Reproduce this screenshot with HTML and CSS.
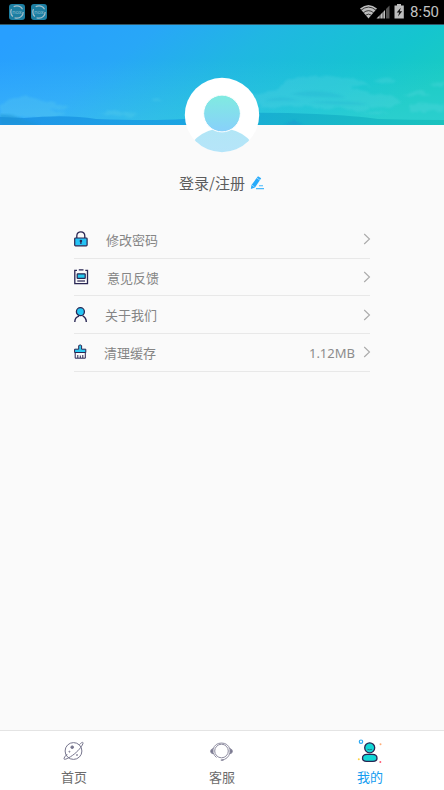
FILE: index.html
```html
<!DOCTYPE html>
<html lang="zh-CN">
<head>
<meta charset="utf-8">
<title>我的</title>
<link rel="stylesheet" href="styles.css">
</head>
<body>
<div class="screen">
  <header class="status">
    <div class="apps">
      <svg class="app" viewBox="0 0 16 16"><rect width="16" height="16" rx="3" fill="#1c7ea2"/><circle cx="8" cy="8" r="6.2" fill="none" stroke="#a4bec9" stroke-width="1.2" stroke-dasharray="12 2 8 3 10 4"/><text x="8" y="10" text-anchor="middle">nox</text></svg>
      <svg class="app" viewBox="0 0 16 16"><rect width="16" height="16" rx="3" fill="#1c7ea2"/><circle cx="8" cy="8" r="6.2" fill="none" stroke="#a4bec9" stroke-width="1.2" stroke-dasharray="12 2 8 3 10 4"/><text x="8" y="10" text-anchor="middle">nox</text></svg>
    </div>
    <div class="system">
      <svg width="46" height="16" viewBox="0 0 46 16">
        <path d="M0 4.5Q8.5-2.5 17 4.5L8.5 14.5Z" fill="#bdbdbd"/>
        <path d="M1 6.2Q8.5 0 16 6.2M3.3 8.8Q8.5 4.5 13.7 8.8M5.5 11.2Q8.5 9 11.5 11.2" fill="none" stroke="#000" stroke-width=".7"/>
        <path d="M16.5 14.5L25 6V14.5Z" fill="#bdbdbd"/><path d="M26 14.5V5L29.5 1.5V14.5Z" fill="#555"/>
        <path d="M20 10V15M23 7V15" stroke="#000" stroke-width=".6"/>
        <path d="M34.5 1.5H37V0H41V1.5H43.8V14.5H34.5Z" fill="#bdbdbd"/><path d="M40.8 3.8L36.7 8.6H39.2L38 12.4L42.2 7.2H39.7Z" fill="#111"/>
      </svg>
      <span>8:50</span>
    </div>
  </header>
  <section class="hero">
    <svg class="scene" viewBox="0 0 444 101" preserveAspectRatio="none">
      <defs>
        <linearGradient id="sky" x1="0" y1=".2" x2="1" y2=".5"><stop offset="0" stop-color="#289fff"/><stop offset=".28" stop-color="#28a7f7"/><stop offset=".52" stop-color="#20b7e2"/><stop offset=".84" stop-color="#15c5cf"/><stop offset="1" stop-color="#18cbc3"/></linearGradient>
        <linearGradient id="haze" x1="0" y1="0" x2="0" y2="1"><stop offset=".35" stop-color="#7cdfff" stop-opacity="0"/><stop offset="1" stop-color="#7cdfff" stop-opacity=".2"/></linearGradient>
        <linearGradient id="hill"><stop offset="0" stop-color="#1b90e6"/><stop offset=".4" stop-color="#189fe2"/><stop offset=".65" stop-color="#15aecc"/><stop offset="1" stop-color="#17c0bb"/></linearGradient>
        <filter id="soft"><feGaussianBlur stdDeviation="1.3"/></filter>
        <filter id="puff" x="-10%" y="-20%" width="120%" height="140%"><feTurbulence type="fractalNoise" baseFrequency=".09 .2" numOctaves="3" seed="7"/><feDisplacementMap in="SourceGraphic" scale="6" xChannelSelector="R" yChannelSelector="G"/><feGaussianBlur stdDeviation="1"/></filter>
      </defs>
      <rect width="444" height="101" fill="url(#sky)"/><rect width="444" height="101" fill="url(#haze)"/>
      <g fill="#72dde9" opacity=".2" filter="url(#puff)">
        <path d="M250 72L278 65 288 55 303 52 326 51 345 53 364 56 370 61 350 62 361 67 388 72 403 78 388 83 370 82 365 87 346 84 318 84 296 81 269 84 244 79Z"/>
        <path d="M280 65L291 56 311 53 347 55 363 60 339 61 326 66 302 62ZM261 79L288 74 315 80 350 76 389 80 350 83 310 80 284 83Z"/>
        <path d="M374 56L391 53 397 57 383 60ZM403 70L423 66 430 70 414 72ZM407 82L419 79 444 80V86L411 87ZM429 60L444 56V63ZM360 90L374 87 390 90Z"/>
        <path d="M0 82L8 76 14 73 25 72 39 75 55 79 68 84 48 86 67 90 48 93H0ZM97 89L115 86 129 88 140 91 119 92ZM151 76L158 73 163 76Z"/>
      </g>
      <path d="M290 70Q319 62 346 73Q319 74 290 70M265 77Q278 70 300 76M309 78Q341 75 369 80Q346 82 309 78" fill="#1aabd0" opacity=".25" filter="url(#soft)"/>
      <path d="M0 93L24 94Q67 90 96 95Q150 97 184 95L230 89Q275 88 316 90T378 95Q410 96 444 96V101H0Z" fill="url(#hill)" opacity=".85"/>
      <path d="M0 90L12 91 25 96 40 101H0ZM284 101L294 96 303 101Z" fill="#1d94d0" opacity=".5" filter="url(#soft)"/>
    </svg>
  </section>
  <main class="profile">
    <svg class="avatar" viewBox="0 0 76 76">
      <defs><linearGradient id="face" x1="0" y1="0" x2="0" y2="1"><stop stop-color="#80ebe0"/><stop offset="1" stop-color="#88d0fb"/></linearGradient><linearGradient id="body" x1="0" y1="0" x2="0" y2="1"><stop stop-color="#b2e6f6"/><stop offset="1" stop-color="#bbe2fe"/></linearGradient><clipPath id="disc"><circle cx="38" cy="38" r="37.2"/></clipPath></defs>
      <circle cx="38" cy="38" r="37.2" fill="#fff"/><ellipse cx="38" cy="84" rx="36" ry="32.5" fill="url(#body)" clip-path="url(#disc)"/>
      <circle cx="38" cy="36.5" r="18.4" fill="url(#face)" stroke="#fff"/>
    </svg>
    <div class="login"><span>登录/注册</span><svg width="15" height="14" viewBox="0 0 15 14"><path d="M8 .2L11.2 2.2 5 11.5 .8 13 1.5 9Z" fill="#27aafa"/><path d="M7 2.2L10 4.2M2 9.2L4.5 11" stroke="#fff" stroke-width=".5"/><path d="M9 9.8H13M6 12.6H14" stroke="#48b9fc" stroke-width="1.1"/></svg></div>
    <ul class="menu">
      <li><svg class="icon" viewBox="0 0 16 16"><path d="M2.8 7V5C2.8-.6 10.8-.6 10.8 5V7" fill="none" stroke="#292653" stroke-width="1.3"/><rect x=".7" y="7" width="12.4" height="7.8" rx=".8" fill="#25c3f6" stroke="#292653" stroke-width="1.2"/><path d="M6.9 10V13" stroke="#292653" stroke-width="1.2"/><circle cx="6.9" cy="10" r="1.3" fill="#292653"/></svg><span class="label first">修改密码</span><svg class="arrow" viewBox="0 0 8 12"><path d="M1.2 1L6.5 6 1.2 11"/></svg></li>
      <li><svg class="icon" viewBox="0 0 16 16"><path d="M3 1.3H.8V14.7H13.5V1.3H11.3M4.8 .8H9.5" fill="none" stroke="#292653" stroke-width="1.3"/><rect x="3.2" y="4.8" width="8" height="4.6" rx=".5" fill="#25c9ee" stroke="#292653" stroke-width="1.2"/><path d="M3.3 12H11" stroke="#292653" stroke-width="1.2"/></svg><span class="label second">意见反馈</span><svg class="arrow" viewBox="0 0 8 12"><path d="M1.2 1L6.5 6 1.2 11"/></svg></li>
      <li><svg class="icon" viewBox="0 0 16 16"><circle cx="6.4" cy="4.7" r="4" fill="#26c6f4" stroke="#292653" stroke-width="1.3"/><path d="M.8 15C.8 11 3.2 9.7 5 9.2M8.7 8.8Q12.3 10.5 12.3 15" fill="none" stroke="#292653" stroke-width="1.4"/></svg><span class="label third">关于我们</span><svg class="arrow" viewBox="0 0 8 12"><path d="M1.2 1L6.5 6 1.2 11"/></svg></li>
      <li><svg class="icon" viewBox="0 0 16 16"><path d="M4.7 5.2V1.6Q6.2 .2 7.6 1.6V5.2H11.8V8.5H.6V5.2Z" fill="#2ccaf2" stroke="#292653" stroke-width="1"/><path d="M1.2 8.5V14.2H11.3V8.5M3.8 11V14M6.3 11.5V14M8.8 11V14" fill="none" stroke="#292653" stroke-width="1"/></svg><span class="label fourth">清理缓存</span><span class="size">1.12MB</span><svg class="arrow" viewBox="0 0 8 12"><path d="M1.2 1L6.5 6 1.2 11"/></svg></li>
    </ul>
  </main>
  <nav class="tabs">
    <a><svg width="30" height="30" viewBox="0 0 30 30" fill="none" stroke="#77768e"><circle cx="14.5" cy="15" r="8.4"/><path d="M20.4 8.6C22.5 6.6 23.6 5.8 24 6.7S22 12 17.2 16.4 6 24.1 5.2 23.2 6.3 19.8 8.3 18"/><circle cx="13.2" cy="11.2" r="1.3" fill="#77768e"/><circle cx="10.4" cy="15.7" r=".5"/><circle cx="18" cy="19" r=".5"/></svg><span>首页</span></a>
    <a><svg width="30" height="30" viewBox="0 0 30 30" fill="none" stroke="#8d8ca0"><circle cx="14.5" cy="15" r="6.8"/><path d="M6.1 13A8.9 8.9 0 0 1 22.9 13M22.9 17Q21 23.2 15 24M6.2 17Q7.5 20 9.5 21.5"/><path d="M6 12.7V17.8Q3.6 17.3 3.6 15.3T6 12.7M23 12.7V17.8Q25.4 17.3 25.4 15.3T23 12.7" fill="#77768e"/><path d="M13.8 24.1H16.5" stroke-width="1.5"/></svg><span>客服</span></a>
    <a class="active"><svg width="30" height="30" viewBox="0 0 30 30"><circle cx="6" cy="5.7" r="1.7" fill="none" stroke="#2ca9f4" stroke-width="1.2"/><ellipse cx="14.7" cy="11.8" rx="5" ry="5" fill="#11d7d6" stroke="#292653" stroke-width="1.3"/><path d="M7.5 22.2Q7.5 18.3 12 18.3H17.5Q22 18.3 22 22.2Q22 25.3 18 25.3H11.5Q7.5 25.3 7.5 22.2Z" fill="#11d7d6" stroke="#292653" stroke-width="1.3"/><path d="M12.4 13.3Q14.7 14.2 17 13.3" stroke="#217989" fill="none"/><circle cx="25.5" cy="8.2" r="1" fill="#ffad78"/><circle cx="3.8" cy="23.2" r="1" fill="#ffd348"/><circle cx="25.3" cy="26" r="1" fill="#ff5b76"/></svg><span>我的</span></a>
  </nav>
</div>
</body>
</html>
```
FILE: styles.css
```css
* { box-sizing: border-box; }
body { margin: 0; font-family: "Noto Sans CJK SC", sans-serif; }
.screen { width: 444px; height: 790px; display: flex; flex-direction: column; background: #fafafa; }
.status { height: 24px; background: #000; display: flex; justify-content: space-between; padding: 4px 5px 0 9px; flex: none; }
.apps { display: flex; gap: 6px; }
.app { width: 16px; height: 16px; }
.app text { font: 6px Roboto, sans-serif; fill: #7fb6c9; }
.system { display: flex; color: #c2c2c2; font: 15px/17px Roboto, sans-serif; gap: 4px; }
.hero { height: 101px; border-top: 1px solid #315767; flex: none; }
.scene { display: block; width: 100%; height: 100%; }
.profile { flex: 1; display: flex; flex-direction: column; align-items: center; }
.avatar { width: 76px; height: 76px; margin-top: -48px; position: relative; flex: none; }
.login { display: flex; align-items: center; gap: 5px; height: 24px; margin-top: 18px; color: #5c5c5c; font-size: 15px; line-height: 24px; }
.menu { list-style: none; width: 296px; margin: 26px 0 0; padding: 0; }
.menu li { height: 37.7px; display: flex; align-items: center; border-bottom: 1px solid #e8e8e8; }
.icon { width: 16px; height: 16px; flex: none; }
.label { color: #858585; font-size: 13px; line-height: 20px; margin: 1px 0 0 16px; }
.second { margin-left: 17px; }
.third { margin-left: 15px; }
.fourth { margin-left: 14px; }
.arrow { width: 8px; height: 12px; margin-left: auto; margin-right: -1px; fill: none; stroke: #aaa; stroke-width: 1.1; }
.size { margin: 2px 0 0 auto; color: #8c8c8c; font: 13px/20px "Noto Sans", sans-serif; }
.size + .arrow { margin-left: 8px; }
.tabs { height: 60px; background: #fff; border-top: 1px solid #e4e4e4; display: grid; grid-template-columns: repeat(3, 1fr); flex: none; }
.tabs a { display: flex; flex-direction: column; align-items: center; padding-top: 5px; color: #6c6c6c; font-size: 13px; line-height: 20px; }
.tabs svg { flex: none; }
.tabs span { margin-top: 1px; }
.tabs .active { color: #159cf0; }
```
